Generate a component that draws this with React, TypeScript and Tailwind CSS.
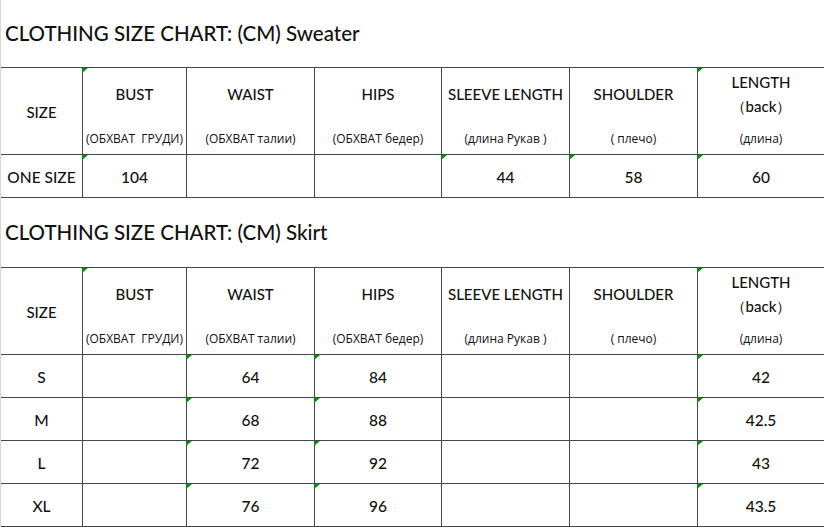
import React from 'react';

const GRID = 'grid grid-cols-[81px_104px_128px_127px_128px_128px_127px]';
const LINE = 'border-[#474747]';

interface Head { label: string; label2?: string; sub: string; }

const HEADS: Head[] = [
  { label: 'BUST', sub: '(ОБХВАТ  ГРУДИ)' },
  { label: 'WAIST', sub: '(ОБХВАТ талии)' },
  { label: 'HIPS', sub: '(ОБХВАТ бедер)' },
  { label: 'SLEEVE LENGTH', sub: '(длина Рукав )' },
  { label: 'SHOULDER', sub: '( плечо)' },
  { label: 'LENGTH', label2: '（back）', sub: '(длина)' },
];

function Mark() {
  return (
    <svg className="absolute -left-px top-0" width="6" height="5" viewBox="0 0 6 5">
      <polygon points="0,0 6,0 0,5" fill="#0a8a0a" />
    </svg>
  );
}

function Table({ marksHead, rows }: { marksHead: number[]; rows: { cells: string[]; marks: number[] }[] }) {
  return (
    <div className={`border-t ${LINE}`}>
      {/* header */}
      <div className={`${GRID} h-[87px] border-b ${LINE}`}>
        <div className="flex items-center justify-center pt-[3px] text-[15px] font-medium">SIZE</div>
        {HEADS.map((h, i) => (
          <div key={h.label} className={`relative flex flex-col border-l ${LINE}`}>
            {marksHead.includes(i + 1) && <Mark />}
            <div className="h-[51px] flex flex-col items-center justify-center text-[15px] font-medium leading-[24px]">
              <span>{h.label}</span>
              {h.label2 && <span>{h.label2}</span>}
            </div>
            <div className="flex-1 flex items-center justify-center pt-[4px] whitespace-pre text-[12px] font-['Open_Sans',sans-serif]">
              {h.sub}
            </div>
          </div>
        ))}
      </div>
      {/* rows */}
      {rows.map((r, ri) => (
        <div key={ri} className={`${GRID} h-[43px] border-b ${LINE}`}>
          {r.cells.map((c, ci) => (
            <div key={ci} className={`relative flex items-center justify-center pt-[3px] text-[15.5px] font-medium ${ci > 0 ? `border-l ${LINE}` : ''}`}>
              {r.marks.includes(ci) && <Mark />}
              {c}
            </div>
          ))}
        </div>
      ))}
    </div>
  );
}

export default function App() {
  return (
    <div className="w-[824px] h-[527px] bg-white border-l border-[#d6d6d6] overflow-hidden text-[#111] font-['Lato','Open_Sans',sans-serif]">
      <div className="h-[67px] flex items-center pl-1 text-[20.5px] font-medium">CLOTHING SIZE CHART: (CM) Sweater</div>
      <Table
        marksHead={[1, 6]}
        rows={[{ cells: ['ONE SIZE', '104', '', '', '44', '58', '60'], marks: [1, 4, 5, 6] }]}
      />
      <div className="h-[69px] flex items-center pl-1 text-[20.5px] font-medium">CLOTHING SIZE CHART: (CM) Skirt</div>
      <Table
        marksHead={[1, 6]}
        rows={[
          { cells: ['S', '', '64', '84', '', '', '42'], marks: [2, 3, 6] },
          { cells: ['M', '', '68', '88', '', '', '42.5'], marks: [2, 3, 6] },
          { cells: ['L', '', '72', '92', '', '', '43'], marks: [2, 3, 6] },
          { cells: ['XL', '', '76', '96', '', '', '43.5'], marks: [2, 3, 6] },
        ]}
      />
    </div>
  );
}
